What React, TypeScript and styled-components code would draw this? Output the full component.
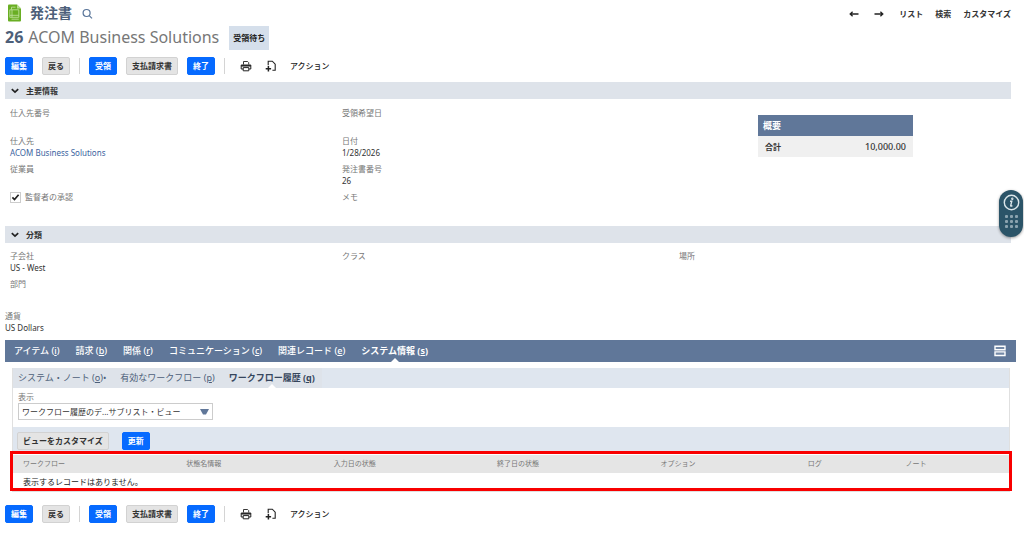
import React from "react";
import styled, { createGlobalStyle, css } from "styled-components";

const GlobalStyle = createGlobalStyle`
  *, *::before, *::after { box-sizing: border-box; }
  body {
    margin: 0;
    background: #fff;
    color: #333;
    font-family: "Noto Sans", "Noto Sans CJK JP", sans-serif;
    font-size: 8px;
    line-height: 12px;
  }
  button, select, input { font: inherit; color: inherit; margin: 0; }
  h1, h2, p, dl, dd { margin: 0; font-size: inherit; }
  a { color: inherit; text-decoration: none; }
`;

const Page = styled.main`
  padding: 0 8px 8px 5px;
`;

const TitleBar = styled.header`
  display: flex;
  align-items: center;
  height: 26px;
  padding: 0 5px 0 2px;
`;

const Title = styled.h1`
  margin: 0 10px 0 8px;
  color: #4d5f79;
  font-size: 14px;
  line-height: 20px;
  font-weight: 700;
`;

const IconButton = styled.button`
  display: flex;
  padding: 0;
  border: 0;
  background: none;
`;

const PageLinks = styled.nav`
  display: flex;
  align-items: center;
  gap: 12px;
  margin-left: auto;
  padding-top: 2px;
  font-weight: 700;
`;

const ArrowLink = styled.a`
  display: flex;
  margin-right: 3px;
`;

const RecordLine = styled.div`
  display: flex;
  align-items: center;
  height: 24px;
`;

const RecordName = styled.h2`
  color: #777;
  font-size: 16px;
  line-height: 20px;
  font-weight: 400;
  padding-bottom: 2px;

  strong { color: #4d5f79; margin-right: 5px; }
`;

const Status = styled.span`
  margin-left: 10px;
  padding: 0 4px;
  background: #d5dfeb;
  color: #222;
  line-height: 24px;
  font-weight: 700;
`;

const Toolbar = styled.div`
  display: flex;
  align-items: center;
  height: 18px;
  gap: 9px;
`;

const TopToolbar = styled(Toolbar)`
  margin: 7px 0;
`;

const BottomToolbar = styled(Toolbar)`
  margin-top: 13px;
`;

const Button = styled.button<{ $primary?: boolean }>`
  height: 18px;
  padding: 0 5px;
  border: 1px solid #d2d2d2;
  border-radius: 2px;
  background: #e4e4e4;
  color: #333;
  font-weight: 700;
  line-height: 16px;
  white-space: nowrap;
  ${(p) =>
    p.$primary &&
    css`
      border-color: #066aff;
      background: #066aff;
      color: #fff;
    `}
`;

const Separator = styled.span`
  width: 1px;
  height: 16px;
  background: #d4d4d4;
`;

const ToolIcons = styled.div`
  display: flex;
  align-items: center;
  gap: 13px;
  padding-left: 6px;
`;

const ActionLink = styled.a`
  font-weight: 500;
  color: #222;
`;

const Section = styled.section`
  margin-right: 5px;
`;

const SectionHeader = styled.h2`
  display: flex;
  align-items: center;
  gap: 7px;
  height: 17px;
  padding-left: 6px;
  background: #dee3ea;
  font-weight: 700;
`;

const FieldGrid = styled.div`
  display: grid;
  grid-template-columns: 332fr 337fr 332fr;
  padding: 7px 0 0 5px;
`;

const MainGrid = styled(FieldGrid)`
  grid-template-columns: 332fr 416fr 253fr;
  min-height: 127px;
  padding-top: 8px;
`;

const ClassGrid = styled(FieldGrid)`
  min-height: 67px;
`;

const Field = styled.dl`
  min-height: 28px;
  line-height: 12px;

  dt { color: #777; }
  a { color: #3b64a0; }
`;

const CheckField = styled.label`
  display: flex;
  align-items: center;
  gap: 4px;
  height: 12px;
  color: #777;
`;

const CheckMark = styled.span`
  display: grid;
  width: 11px;
  height: 11px;

  input, svg { grid-area: 1 / 1; }
  input {
    appearance: none;
    width: 11px;
    height: 11px;
    border: 1px solid #ccc;
    background: #fff;
  }
  svg { pointer-events: none; z-index: 1; }
`;

const Summary = styled.table`
  width: 155px;
  margin-top: 8px;
  border-collapse: collapse;
  align-self: start;
  font-weight: 700;

  caption {
    padding: 0 5px;
    background: #607799;
    color: #fff;
    font-size: 9px;
    line-height: 21px;
    text-align: left;
  }
  th, td { padding: 0 7px; background: #f0f0f0; line-height: 21px; }
  th { text-align: left; }
  td { text-align: right; font-size: 9px; font-weight: 500; }
`;

const TabBar = styled.nav`
  display: flex;
  align-items: center;
  gap: 16px;
  height: 22px;
  margin-top: 2px;
  padding: 0 10px 0 9px;
  background: #607799;
  color: #fff;
  font-size: 9px;
`;

const Tab = styled.a<{ $active?: boolean }>`
  position: relative;
  font-weight: ${(p) => (p.$active ? 700 : 500)};
  line-height: 22px;
  white-space: nowrap;
  ${(p) =>
    p.$active &&
    css`
      &::after {
        content: "";
        position: absolute;
        left: 50%;
        bottom: 0;
        margin-left: -4px;
        border: 4px solid transparent;
        border-top: 0;
        border-bottom-color: #fff;
      }
    `}
`;

const LayoutButton = styled(IconButton)`
  margin-left: auto;
`;

const Panel = styled.div`
  margin: 6px 6px 0 7px;
  border: 1px solid #e0e0e0;
  border-top: 0;
`;

const SubTabBar = styled.nav`
  display: flex;
  background: #dfe6ef;
  color: #4d5f79;
  font-size: 9px;
`;

const SubTabs = styled.div`
  display: flex;
  gap: 14px;
  padding: 0 7px 0 5px;
  background: #dee3ea;
`;

const SubTab = styled(Tab)`
  line-height: 20px;
  font-weight: ${(p) => (p.$active ? 700 : 400)};
  color: ${(p) => (p.$active ? "#36465d" : "#4d5f79")};
`;

const ViewField = styled.div`
  display: flex;
  flex-direction: column;
  align-items: flex-start;
  height: 39px;
  padding: 3px 5px 0;

  label { color: #777; }
`;

const SelectBox = styled.div`
  display: grid;
  width: 195px;

  select, svg { grid-area: 1 / 1; }
  select {
    appearance: none;
    height: 17px;
    padding: 0 3px;
    border: 1px solid #ccc;
    border-radius: 0;
    background: #fff;
    line-height: 15px;
  }
  svg { align-self: center; justify-self: end; margin-right: 4px; pointer-events: none; }
`;

const ListActions = styled.div`
  display: flex;
  align-items: center;
  gap: 13px;
  height: 26px;
  padding: 2px 4px 0;
  background: #dfe6ef;
`;

const ListArea = styled.div`
  position: relative;
  padding-top: 2px;
`;

const Highlight = styled.div`
  position: absolute;
  inset: -2px -3px 0 -3px;
  border: 3px solid #f90000;
  pointer-events: none;
`;

const RecordTable = styled.table`
  width: 100%;
  table-layout: fixed;
  border-collapse: collapse;
  text-align: left;

  th, td { padding: 0 0 0 10px; line-height: 18px; }
  th { background: #e5e5e5; color: #777; font-size: 7px; font-weight: 400; }
  td { padding-bottom: 1px; color: #222; line-height: 17px; }
`;

const HelpPill = styled.aside`
  position: fixed;
  top: 190px;
  right: 1px;
  display: flex;
  flex-direction: column;
  align-items: center;
  gap: 4px;
  width: 24px;
  height: 47px;
  padding-top: 4px;
  border-radius: 12px;
  background: #2b5468;
  box-shadow: 0 1px 3px rgba(0, 0, 0, 0.4);
`;

const Arrow = ({ right }: { right?: boolean }) => (
  <svg width="10" height="8" viewBox="0 0 10 8" fill="none" stroke="#222" strokeWidth="1.3">
    {right ? <path d="M.5 4h8.3M6.4 1.8L8.8 4L6.4 6.2" /> : <path d="M9.5 4H1.2M3.6 1.8L1.2 4L3.6 6.2" />}
  </svg>
);

const Chevron = () => (
  <svg width="8" height="6" viewBox="0 0 8 6" fill="none" stroke="#222" strokeWidth="1.7">
    <path d="M0.8 1.2L4 4.2L7.2 1.2" />
  </svg>
);

const RecordIcon = () => (
  <svg width="15" height="18" viewBox="0 0 15 18" fill="none">
    <path d="M1 1.5Q1 .5 2 .5H10L14 4.5V16.5Q14 17.5 13 17.5H2Q1 17.5 1 16.5Z" fill="#69ae23" />
    <path d="M10 .5V4.5H14Z" fill="#b9dd93" />
    <path d="M4.5 5.5V3.2H8.5M2.8 5.8H11.8V13.3H2.8ZM2.8 11.3H11.8M5 5.8V13.3M4.5 15.2H11.8" stroke="#c5e5a3" strokeWidth=".8" />
  </svg>
);

const SearchIcon = () => (
  <svg width="11" height="11" viewBox="0 0 11 11" fill="none" stroke="#587499" strokeWidth="1.2">
    <circle cx="4.6" cy="5" r="3.5" />
    <path d="M7.2 7.6L10 10.4" />
  </svg>
);

const PrintIcon = () => (
  <svg width="12" height="12" viewBox="0 0 12 12" fill="none" stroke="#222">
    <path d="M3.5 4.5V1.5H7.6L8.7 2.6V4.5" strokeWidth=".9" />
    <path d="M3.2 9H1.2V5H10.8V9H8.8" />
    <path d="M1.2 5.8H10.8" strokeWidth="1.5" />
    <path d="M3.2 7.6H8.8V10.8H3.2Z" />
  </svg>
);

const NewIcon = () => (
  <svg width="12" height="12" viewBox="0 0 12 12" fill="none" stroke="#222" strokeWidth="1.1">
    <path d="M3.2 5.2V1.2H7.3L10.2 4.2V10.2H7.4" />
    <path d="M3.4 6V11.4M.7 8.7H6.1" strokeWidth="1.5" />
  </svg>
);

const LayoutIcon = () => (
  <svg width="12" height="12" viewBox="0 0 12 12" fill="#7489a7" stroke="#fff" strokeWidth="1.4">
    <path d="M1 1.2H11V4.8H1ZM1 6.9H11V10.5H1Z" />
  </svg>
);

const Actions = () => (
  <>
    <Button $primary>編集</Button>
    <Button>戻る</Button>
    <Separator />
    <Button $primary>受領</Button>
    <Button>支払請求書</Button>
    <Button $primary>終了</Button>
    <Separator />
    <ToolIcons>
      <IconButton aria-label="印刷"><PrintIcon /></IconButton>
      <IconButton aria-label="新規"><NewIcon /></IconButton>
      <ActionLink href="#actions">アクション</ActionLink>
    </ToolIcons>
  </>
);

const InfoField = ({ label, children }: { label: string; children?: React.ReactNode }) => (
  <Field>
    <dt>{label}</dt>
    {children && <dd>{children}</dd>}
  </Field>
);

const tabs = [
  ["アイテム", "i"],
  ["請求", "b"],
  ["関係", "r"],
  ["コミュニケーション", "c"],
  ["関連レコード", "e"],
  ["システム情報", "s"],
];

const columns: [string, string][] = [
  ["ワークフロー", "16.4%"],
  ["状態名情報", "14.8%"],
  ["入力日の状態", "16.4%"],
  ["終了日の状態", "16.4%"],
  ["オプション", "14.8%"],
  ["ログ", "9.8%"],
  ["ノート", "11.4%"],
];

export default function App() {
  return (
    <Page>
      <GlobalStyle />
      <TitleBar>
        <RecordIcon />
        <Title>発注書</Title>
        <IconButton aria-label="レコード検索"><SearchIcon /></IconButton>
        <PageLinks>
          <ArrowLink href="#prev" aria-label="前へ"><Arrow /></ArrowLink>
          <ArrowLink href="#next" aria-label="次へ"><Arrow right /></ArrowLink>
          <a href="#list">リスト</a>
          <a href="#search">検索</a>
          <a href="#customize">カスタマイズ</a>
        </PageLinks>
      </TitleBar>
      <RecordLine>
        <RecordName><strong>26</strong>ACOM Business Solutions</RecordName>
        <Status>受領待ち</Status>
      </RecordLine>
      <TopToolbar><Actions /></TopToolbar>

      <Section>
        <SectionHeader><Chevron />主要情報</SectionHeader>
        <MainGrid>
          <div>
            <InfoField label="仕入先番号" />
            <InfoField label="仕入先"><a href="#vendor">ACOM Business Solutions</a></InfoField>
            <InfoField label="従業員" />
            <CheckField>
              <CheckMark>
                <input type="checkbox" defaultChecked />
                <svg width="11" height="11" viewBox="0 0 11 11" fill="none" stroke="#222" strokeWidth="1.7">
                  <path d="M2.4 5.4L4.5 7.6L8.6 2.8" />
                </svg>
              </CheckMark>
              監督者の承認
            </CheckField>
          </div>
          <div>
            <InfoField label="受領希望日" />
            <InfoField label="日付">1/28/2026</InfoField>
            <InfoField label="発注書番号">26</InfoField>
            <InfoField label="メモ" />
          </div>
          <Summary>
            <caption>概要</caption>
            <tbody>
              <tr><th scope="row">合計</th><td>10,000.00</td></tr>
            </tbody>
          </Summary>
        </MainGrid>
      </Section>

      <Section>
        <SectionHeader><Chevron />分類</SectionHeader>
        <ClassGrid>
          <div>
            <InfoField label="子会社">US - West</InfoField>
            <InfoField label="部門" />
          </div>
          <InfoField label="クラス" />
          <InfoField label="場所" />
        </ClassGrid>
      </Section>
      <InfoField label="通貨">US Dollars</InfoField>

      <TabBar>
        {tabs.map(([name, key], i) => (
          <Tab key={key} href={`#${key}`} $active={i === tabs.length - 1}>
            {name} (<u>{key}</u>)
          </Tab>
        ))}
        <LayoutButton aria-label="表示切替"><LayoutIcon /></LayoutButton>
      </TabBar>

      <Panel>
        <SubTabBar>
          <SubTabs>
            <SubTab href="#o">システム・ノート (<u>o</u>)•</SubTab>
            <SubTab href="#p">有効なワークフロー (<u>p</u>)</SubTab>
            <SubTab href="#q" $active>ワークフロー履歴 (<u>q</u>)</SubTab>
          </SubTabs>
        </SubTabBar>
        <ViewField>
          <label htmlFor="view">表示</label>
          <SelectBox>
            <select id="view">
              <option>ワークフロー履歴のデ...サブリスト・ビュー</option>
            </select>
            <svg width="9" height="6" viewBox="0 0 9 6" fill="#607799"><path d="M0 0H9L6 5.5H3Z" /></svg>
          </SelectBox>
        </ViewField>
        <ListActions>
          <Button>ビューをカスタマイズ</Button>
          <Button $primary>更新</Button>
        </ListActions>
        <ListArea>
          <RecordTable>
            <thead>
              <tr>
                {columns.map(([name, width]) => (
                  <th key={name} scope="col" style={{ width }}>{name}</th>
                ))}
              </tr>
            </thead>
            <tbody>
              <tr><td colSpan={columns.length}>表示するレコードはありません。</td></tr>
            </tbody>
          </RecordTable>
          <Highlight />
        </ListArea>
      </Panel>
      <BottomToolbar><Actions /></BottomToolbar>

      <HelpPill aria-label="ヘルプ">
        <IconButton aria-label="情報">
          <svg width="17" height="17" viewBox="0 0 17 17" fill="none" stroke="#dbe6ea" strokeWidth="1.4">
            <circle cx="8.5" cy="8.5" r="7.2" />
            <path d="M7 7.2H8.8L7.7 11.6Q7.6 12.5 9.4 11.6" />
            <circle cx="9.3" cy="4.7" r=".5" />
          </svg>
        </IconButton>
        <svg width="13" height="13" viewBox="0 0 13 13" fill="#8ba3af">
          {[0, 5, 10].map((y) => [0, 5, 10].map((x) => <rect key={`${x}-${y}`} x={x} y={y} width="3" height="3" rx="1" />))}
        </svg>
      </HelpPill>
    </Page>
  );
}
